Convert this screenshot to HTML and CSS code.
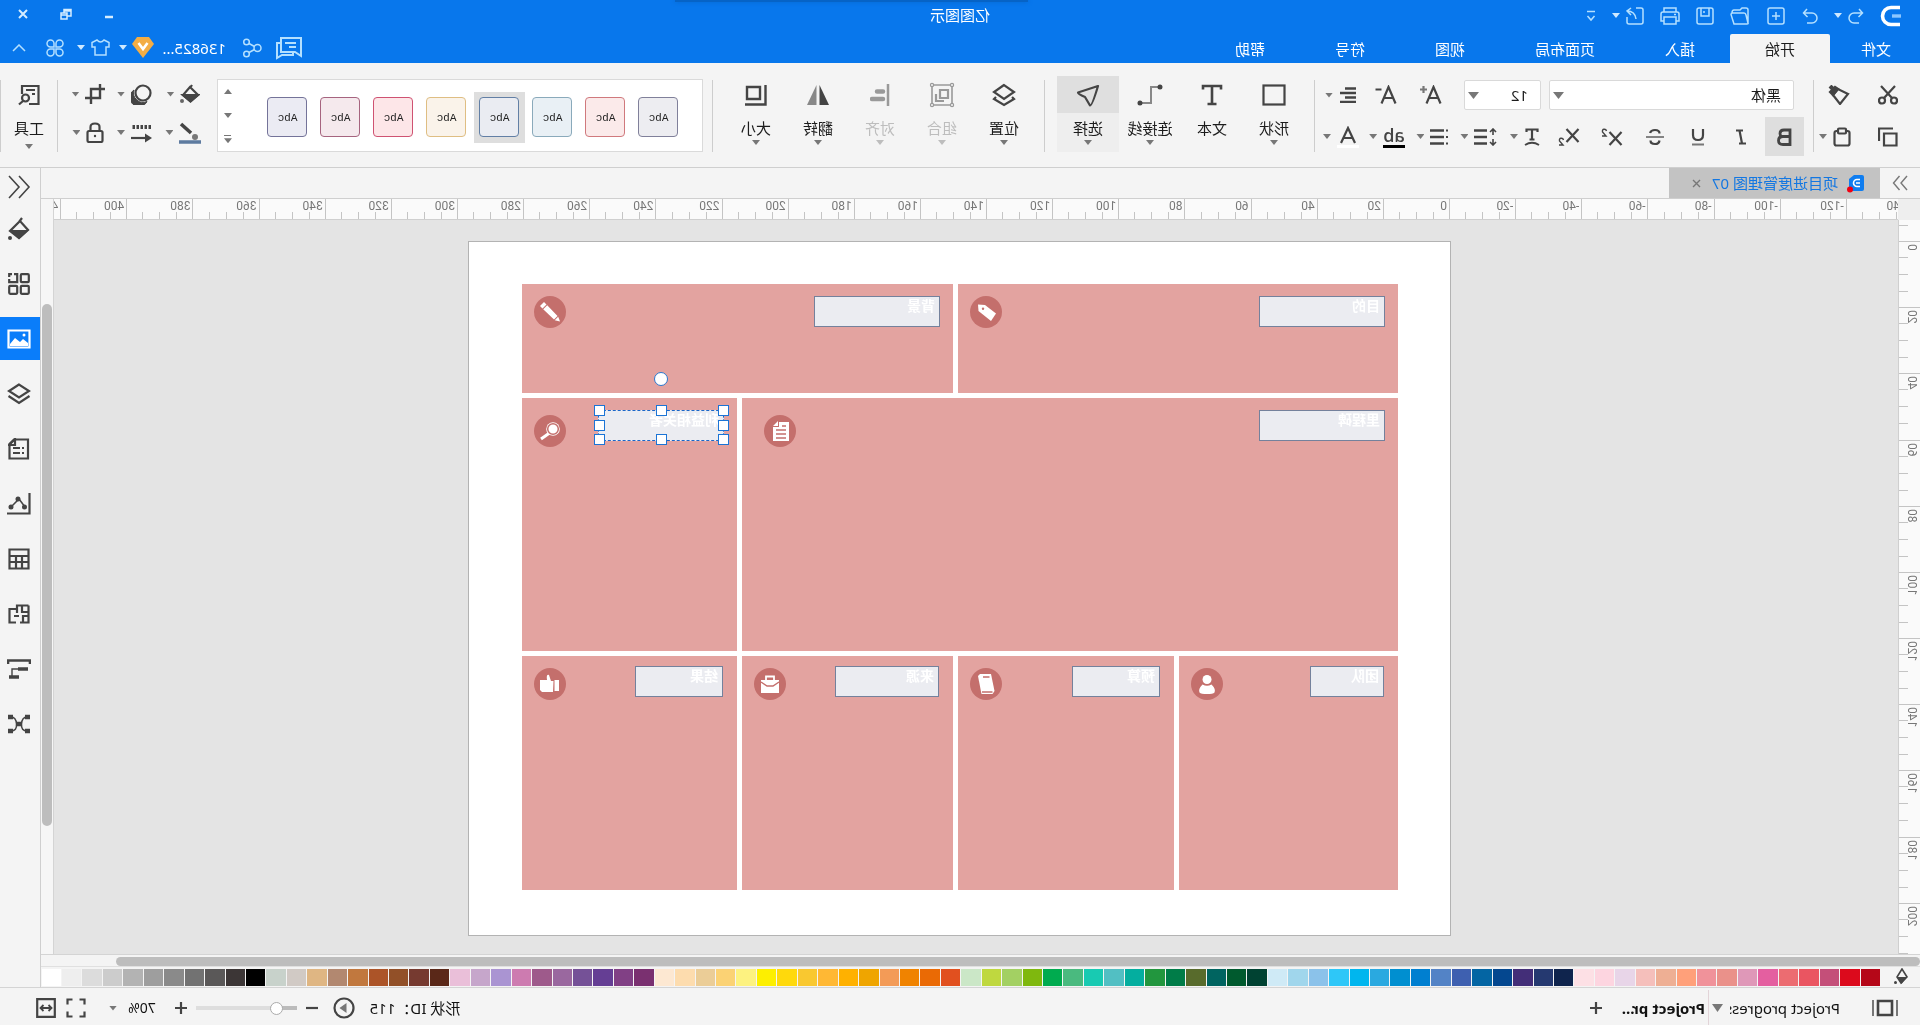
FILE: index.html
```html
<!DOCTYPE html>
<html lang="zh-CN">
<head>
<meta charset="utf-8">
<meta name="viewport" content="width=device-width, initial-scale=1">
<title>亿图图示</title>
<link rel="stylesheet" href="styles.css">
</head>
<body>
<div class="app mirrored">

<header class="header">
  <div class="title-row">
    <div class="quick">
      <svg class="logo" width="22" height="22" viewBox="0 0 22 22"><path d="M2 3H10A8 8 0 0 0 10 19H2" fill="none" stroke="none"/><path d="M20 2.500H11A8.500 8.500 0 0 0 11 19.500H20" transform="matrix(-1 0 0 1 22 0)" fill="none" stroke="#fff" stroke-width="3.600"/><path d="M1 11H10" stroke="#8cc6ff" stroke-width="3.400"/></svg>
      <button class="tb split" aria-label="撤销"><svg width="16" height="16" viewBox="0 0 16 16"><path d="M5 1 1.500 5 5.500 9M1.500 5H10a4.500 4.500 0 0 1 0 10H5"/></svg><i class="caret"></i></button>
      <button class="tb" aria-label="恢复"><svg width="16" height="16" viewBox="0 0 16 16"><path d="M11 1 14.500 5 10.500 9M14.500 5H6a4.500 4.500 0 0 0 0 10H11"/></svg></button>
      <button class="tb wide-gap" aria-label="新建"><svg width="18" height="18" viewBox="0 0 18 18"><rect x="1" y="1" width="16" height="16" rx="2"/><path d="M9 5V13M5 9H13"/></svg></button>
      <button class="tb wide-gap" aria-label="打开"><svg width="20" height="18" viewBox="0 0 20 18"><path d="M2 16V3Q2 1 4 1H8L10 3H16Q18 3 18 6M2 16Q1.500 17 3 17H16L19 7.500Q19 6 17.500 6H6Q4.500 6 4 8L2 16"/></svg></button>
      <button class="tb" aria-label="保存"><svg width="18" height="18" viewBox="0 0 18 18"><rect x="1" y="1" width="16" height="16" rx="2"/><path d="M5 1V9H13V1M10 4V6"/></svg></button>
      <button class="tb" aria-label="打印"><svg width="20" height="18" viewBox="0 0 20 18"><path d="M4 5V1H16V5M4 14H1V7Q1 5 3 5H17Q19 5 19 7V14H16M4 10H16V17H4ZM4 7.500H6"/></svg></button>
      <button class="tb split" aria-label="导出"><svg width="18" height="18" viewBox="0 0 18 18"><path d="M8 1H3Q1 1 1 3V15Q1 17 3 17H15Q17 17 17 15V10M13 1 17 4 13 8M17 4Q9 4 8 12"/></svg><i class="caret"></i></button>
      <button class="tb" aria-label="更多"><svg width="10" height="12" viewBox="0 0 10 12"><path d="M1 1.500H9M1.500 6 5 10 8.500 6"/></svg></button>
    </div>
    <h1 class="title">亿图图示</h1>
    <div class="window-buttons">
      <button aria-label="最小化"><svg width="12" height="12" viewBox="0 0 12 12"><path d="M2 9H10" stroke-width="2.500"/></svg></button>
      <button aria-label="还原"><svg width="12" height="12" viewBox="0 0 12 12"><path d="M5 5H11V11H5ZM5 8H1V1.500H8V5M1 3H8M5 7H11"/></svg></button>
      <button aria-label="关闭"><svg width="12" height="12" viewBox="0 0 12 12"><path d="M2 2 10 10M10 2 2 10" stroke-width="2"/></svg></button>
    </div>
    <div class="dock-shadow"></div>
  </div>
  <div class="tab-row">
    <nav class="tabs">
      <button class="file">文件</button><button class="active">开始</button><button>插入</button><button>页面布局</button><button>视图</button><button>符号</button><button>帮助</button>
    </nav>
    <div class="account">
      <button class="tb" aria-label="消息"><svg class="chat" width="28" height="24" viewBox="0 0 28 24"><path d="M2 2H22V16H8L2 20ZM7 7H18M7 11H14M22 7H26V22L21 19H10V16"/></svg></button>
      <button class="tb" aria-label="分享"><svg width="20" height="20" viewBox="0 0 20 20"><circle cx="4.500" cy="10" r="3.500"/><circle cx="15.500" cy="4" r="2.800"/><circle cx="15.500" cy="16" r="2.800"/><path d="M7.500 8.500 13 5.500M7.500 11.500 13 14.500"/></svg></button>
      <span class="user">136825...</span>
      <button class="tb split vip" aria-label="会员"><svg width="22" height="21" viewBox="0 0 22 21"><path d="M5 0H17L22 7 11 21 0 7Z" fill="#f3ad45" stroke="none"/><path d="M6.500 6 11 12 15.500 6" stroke="#fff" stroke-width="2.600"/></svg><i class="caret"></i></button>
      <button class="tb split" aria-label="皮肤"><svg width="19" height="17" viewBox="0 0 19 17"><path d="M6 1 1 3.500V8H4V16H15V8H18V3.500L13 1Q9.500 5 6 1Z"/></svg><i class="caret"></i></button>
      <button class="tb" aria-label="应用"><svg width="18" height="18" viewBox="0 0 18 18"><path d="M8 8H4.500A3.500 3.500 0 1 1 8 4.500ZM10 8H13.500A3.500 3.500 0 1 0 10 4.500ZM8 10H4.500A3.500 3.500 0 1 0 8 13.500ZM10 10H13.500A3.500 3.500 0 1 1 10 13.500Z"/></svg></button>
      <button class="tb" aria-label="收起"><svg width="14" height="8" viewBox="0 0 14 8"><path d="M1 7 7 1 13 7"/></svg></button>
    </div>
  </div>
</header>

<section class="ribbon">
  <div class="clipboard">
    <button aria-label="剪切"><svg width="20" height="20" viewBox="0 0 20 20"><circle cx="4" cy="15.500" r="3"/><circle cx="16" cy="15.500" r="3"/><path d="M6 13 17 1M14 13 3 1"/></svg></button>
    <button aria-label="格式刷"><svg width="22" height="20" viewBox="0 0 22 20"><path d="M2 9 12 4 17 10 10 19Z"/><path d="M12 4 15 2 20 7 17 10Z" fill="#444"/><path d="M17 4 20 1" stroke-width="4"/></svg></button>
    <button aria-label="复制"><svg width="20" height="20" viewBox="0 0 20 20"><path d="M1.500 6.500H14V18.500H1.500ZM5 1.500H19V14"/></svg></button>
    <button class="split" aria-label="粘贴"><svg width="18" height="20" viewBox="0 0 18 20"><rect x="1.500" y="4" width="15" height="14.500" rx="2"/><rect x="5" y="1.500" width="8" height="5" rx="1" fill="#f4f4f4"/></svg><i class="caret"></i></button>
  </div>
  <div class="sep"></div>
  <div class="font">
    <div class="font-row first">
      <label class="combo family"><select aria-label="字体"><option>黑体</option></select></label>
      <label class="combo size"><select aria-label="字号"><option>12</option></select></label>
      <button class="w45" aria-label="增大字号"><svg width="22" height="20" viewBox="0 0 22 20"><path d="M1.500 18.500 8.500 2 15.500 18.500M4 13H13"/><path d="M18.500 1V8M15 4.500H22" stroke="#777"/></svg></button>
      <button class="w45" aria-label="减小字号"><svg width="22" height="20" viewBox="0 0 22 20"><path d="M1.500 18.500 8.500 2 15.500 18.500M4 13H13M15.500 4.500H21.500"/></svg></button>
      <button class="w46 split" aria-label="对齐"><svg width="18" height="16" viewBox="0 0 18 16"><path d="M1 1.500H12M1 6H17M1 10.500H12M1 15H17" stroke-width="2.400"/></svg><i class="caret"></i></button>
    </div>
    <div class="font-row">
      <button class="bold on" aria-label="粗体"><svg width="15" height="18" viewBox="0 0 15 18"><path d="M2 2H8Q12 2 12 5.500T8 8.500H2H9Q13.500 8.500 13.500 12.500T9 16.500H2Z" stroke-width="2.800"/></svg></button>
      <button class="w43" aria-label="斜体"><svg width="14" height="16" viewBox="0 0 14 16"><path d="M5 1.500H12M2 14.500H9M8.500 1.500 6 14.500"/></svg></button>
      <button class="w43" aria-label="下划线"><svg width="14" height="18" viewBox="0 0 14 18"><path d="M2 1V7Q2 12 7 12T12 7V1"/><path d="M1 16.500H13" stroke="#777" stroke-width="2"/></svg></button>
      <button class="w43" aria-label="删除线"><svg width="18" height="18" viewBox="0 0 18 18"><path d="M14 5Q13 2 9 2 4.500 2 4.500 5.500M4.500 12.500Q5 16 9 16 13.500 16 13.500 12.500"/><path d="M0 9H18" stroke="#777" stroke-width="1.800"/></svg></button>
      <button class="w43" aria-label="上标"><svg width="22" height="18" viewBox="0 0 22 18"><path d="M1.500 4 13.500 17M13.500 4 1.500 17"/><path d="M16.500 3Q17 1 19 1.200T20.500 4L17 8H21" stroke-width="1.400"/></svg></button>
      <button class="w43" aria-label="下标"><svg width="22" height="18" viewBox="0 0 22 18"><path d="M1.500 1 13.500 14M13.500 1 1.500 14"/><path d="M16.500 12Q17 10 19 10.200T20.500 13L17 17H21" stroke-width="1.400"/></svg></button>
      <button class="w46 split" aria-label="文字效果"><svg width="16" height="18" viewBox="0 0 16 18"><path d="M2.500 4V1.500H13.500V4M8 1.500V11.500M5.500 11.500H10.500"/><path d="M1 17Q8 12.500 15 17" stroke-width="1.800"/></svg><i class="caret"></i></button>
      <button class="w46 split" aria-label="行距"><svg width="23" height="18" viewBox="0 0 23 18"><path d="M10 2.500H23M10 9H23M10 15.500H23" stroke-width="2.400"/><path d="M1 4 4 1 7 4M4 1V7M1 14 4 17 7 14M4 17V11" stroke-width="1.600"/></svg><i class="caret"></i></button>
      <button class="w46 split" aria-label="列表"><svg width="19" height="18" viewBox="0 0 19 18"><path d="M5 2.500H19M5 9H19M5 15.500H19" stroke-width="2.400"/><path d="M1 2.500H3M1 9H3M1 15.500H3" stroke-width="2.200"/></svg><i class="caret"></i></button>
      <button class="w46 split" aria-label="突出显示"><span class="ab">ab</span><i class="caret"></i></button>
      <button class="w46 split" aria-label="字体颜色"><svg width="22" height="22" viewBox="0 0 22 22"><path d="M4 17 11 2 18 17M6.500 12H15.500"/><path d="M0 20.500H22" stroke="#fff" stroke-width="3"/></svg><i class="caret"></i></button>
    </div>
  </div>
  <div class="sep"></div>
  <div class="bigs">
    <button><span class="ico"><svg width="24" height="22" viewBox="0 0 24 22"><rect x="1.500" y="1.500" width="21" height="19"/></svg></span><span>形状</span><i class="caret"></i></button>
    <button><span class="ico"><svg width="22" height="22" viewBox="0 0 22 22"><path d="M2 5.500V2H20V5.500M11 2V20M6.500 20H15.500" stroke-width="2.600"/></svg></span><span>文本</span></button>
    <button><span class="ico"><svg width="26" height="22" viewBox="0 0 26 22"><path d="M3 3H12V19H23" stroke="#888" stroke-width="2"/><circle cx="3" cy="3" r="2.500" fill="#444" stroke="none"/><circle cx="23" cy="19" r="2.500" fill="#444" stroke="none"/></svg></span><span>连接线</span><i class="caret"></i></button>
    <button class="on"><span class="ico"><svg width="24" height="24" viewBox="0 0 24 24"><path d="M2 3 22 9.500Q22 11 15 14L10 22.500Q8 23 2 3Z" stroke-linejoin="round"/></svg></span><span>选择</span><i class="caret"></i></button>
  </div>
  <div class="sep"></div>
  <div class="bigs">
    <button><span class="ico"><svg width="24" height="24" viewBox="0 0 24 24"><path d="M12 2 22 9 12 16 2 9ZM4 14 2 16 12 22 22 16 20 14"/></svg></span><span>位置</span><i class="caret"></i></button>
    <button disabled><span class="ico"><svg width="26" height="26" viewBox="0 0 26 26"><path d="M3 3H23V23H3Z" stroke-width="1.600"/><path d="M7 8H15V16H7Z M11 19H19V12"/><g fill="#f4f4f4" stroke-width="1.200"><circle cx="3" cy="3" r="1.600"/><circle cx="23" cy="3" r="1.600"/><circle cx="3" cy="23" r="1.600"/><circle cx="23" cy="23" r="1.600"/></g></svg></span><span>组合</span><i class="caret"></i></button>
    <button disabled><span class="ico"><svg width="20" height="22" viewBox="0 0 20 22"><path d="M2 0V22" stroke-width="2.500"/><path d="M7 7.500H13M7 15H18" stroke-width="4.500" stroke-linecap="round"/></svg></span><span>对齐</span><i class="caret"></i></button>
    <button><span class="ico"><svg width="24" height="22" viewBox="0 0 24 22"><path d="M10.500 1V21H1Z" fill="#444" stroke="none"/><path d="M13.500 1V21H23Z" fill="#888" stroke="none"/></svg></span><span>翻转</span><i class="caret"></i></button>
    <button><span class="ico"><svg width="22" height="22" viewBox="0 0 22 22"><path d="M7 3H20V15H7ZM1.500 1V20.500H22" stroke-width="2.400"/></svg></span><span>大小</span><i class="caret"></i></button>
  </div>
  <div class="sep"></div>
  <div class="gallery">
    <div class="chips">
      <button class="chip c1"><span>Abc</span></button><button class="chip c2"><span>Abc</span></button><button class="chip c3"><span>Abc</span></button><button class="chip c4 on"><span>Abc</span></button><button class="chip c5"><span>Abc</span></button><button class="chip c6"><span>Abc</span></button><button class="chip c7"><span>Abc</span></button><button class="chip c8"><span>Abc</span></button>
    </div>
    <div class="spin"><button aria-label="上"><i class="caret up"></i></button><button aria-label="下"><i class="caret"></i></button><button class="all" aria-label="全部"><i class="caret"></i></button></div>
  </div>
  <div class="style-tools">
    <button class="split" aria-label="填充"><svg width="20" height="20" viewBox="0 0 20 20"><path d="M8 1 10 4M10 3 17 11 9.500 17 2 11Z"/><path d="M2 11H17L9.500 17.500Z" fill="#444"/><circle cx="18" cy="17" r="2" fill="#666" stroke="none"/></svg><i class="caret"></i></button>
    <button class="split" aria-label="阴影"><svg width="21" height="21" viewBox="0 0 21 21"><circle cx="9" cy="9" r="7.500"/><path d="M18 6A9 9 0 1 1 5 17.500 9.500 9.500 0 0 0 18 6Z" fill="#444" stroke-width="1"/></svg><i class="caret"></i></button>
    <button class="split" aria-label="裁剪"><svg width="20" height="20" viewBox="0 0 20 20"><path d="M5 0V14H20M0 5H14V20" stroke-width="2.400"/></svg><i class="caret"></i></button>
    <button class="split" aria-label="线条"><svg width="22" height="22" viewBox="0 0 22 22"><path d="M20 2 10 11" stroke-width="3.600"/><circle cx="6" cy="15" r="3" fill="#777" stroke="none"/><path d="M0 20H22" stroke="#5d7a9f" stroke-width="3.500"/></svg><i class="caret"></i></button>
    <button class="split" aria-label="箭头"><svg width="21" height="20" viewBox="0 0 21 20"><path d="M1 4H20" stroke-width="4" stroke-dasharray="2.500 1.500"/><path d="M21 15H5"/><path d="M7 10.500 0 15 7 19.500Z" fill="#444" stroke="none"/></svg><i class="caret"></i></button>
    <button class="split" aria-label="锁定"><svg width="18" height="21" viewBox="0 0 18 21"><rect x="1.500" y="9" width="15" height="11" rx="1.500"/><path d="M4.500 9V5Q4.500 1.500 9 1.500T13.500 5V9" /><circle cx="9" cy="14" r="1.200" fill="#444" stroke="none"/></svg><i class="caret"></i></button>
  </div>
  <div class="sep"></div>
  <div class="bigs tools">
    <button><span class="ico"><svg width="22" height="22" viewBox="0 0 22 22"><path d="M11 20H1.500V2H18V10M5 6H14M5 10H8" stroke-width="2.200"/><circle cx="14.500" cy="14" r="3.500"/><path d="M17 17 21 20.500"/></svg></span><span>工具</span><i class="caret"></i></button>
  </div>
  <div class="sep"></div>
</section>

<main class="body">
  <div class="main">
    <div class="doc-tabs">
      <button class="more" aria-label="展开"><svg width="16" height="16" viewBox="0 0 16 16"><path d="M1 1 7 8 1 15M8.500 1 14.500 8 8.500 15"/></svg></button>
      <div class="doc">
        <svg width="18" height="19" viewBox="0 0 18 19"><path d="M1 3Q1 1 3 1H11L16 5V15Q16 17 14 17H3Q1 17 1 15Z" fill="#0f7df0"/><path d="M5 5.500H8A3.500 3.500 0 0 1 8 12.500H5M5 9H9" fill="none" stroke="#fff" stroke-width="1.600"/><circle cx="15" cy="15.500" r="3" fill="#f00012"/></svg>
        <a href="#page">项目进度管理图 07</a>
        <button aria-label="关闭文档"><svg width="9" height="9" viewBox="0 0 9 9"><path d="M1 1 8 8M8 1 1 8"/></svg></button>
      </div>
    </div>
    <div class="stage">
      <div class="corner"></div>
      <div class="ruler-h"><div class="scale" id="ruler-h"></div></div>
      <div class="ruler-v"><div class="scale" id="ruler-v"></div></div>
      <div class="canvas">
        <div class="page" id="page">
          <div class="cell span2"><div class="tag">目的</div><svg class="disc" viewBox="0 0 32 32"><path d="M24 8.500 23.500 15 11 25 6 17.500 17 9Z"/><circle class="hole" cx="19" cy="12.800" r="1.200"/></svg></div>
          <div class="cell span2"><div class="tag">背景</div><svg class="disc" viewBox="0 0 32 32"><path d="M22 6 26 10 23.500 12.500 19.500 8.500ZM18.800 9.200 22.800 13.200 12 23.500 8.500 20ZM7.800 20.700 11.300 24.200 6 25.500Z"/></svg></div>
          <div class="cell span3 mid wide"><div class="tag">里程碑</div><svg class="disc" viewBox="0 0 32 32"><path d="M7 7H17V12H23V26H7ZM18 6 23 11H18Z"/><path class="cut" d="M10 11H14M10 15H20M10 19H20M10 23H20"/></svg></div>
          <div class="cell mid">
            <div class="tag selected">利益相关者
              <i class="rot"></i><i class="h tl"></i><i class="h tc"></i><i class="h tr"></i><i class="h ml"></i><i class="h mr"></i><i class="h bl"></i><i class="h bc"></i><i class="h br"></i>
            </div>
            <svg class="disc" viewBox="0 0 32 32"><path d="M16.500 18 25 24" stroke="#fff" stroke-width="3"/><circle cx="13" cy="14" r="6.800"/><circle class="cut" cx="13" cy="14" r="5.300" stroke-width="1"/></svg>
          </div>
          <div class="cell low"><div class="tag s74">团队</div><svg class="disc" viewBox="0 0 32 32"><circle cx="16" cy="11.500" r="4.500"/><path d="M11.500 16.500Q16 19 20.500 16.500 25 21 23.500 24.500 22 26 16 26T8.500 24.500Q7 21 11.500 16.500Z"/></svg></div>
          <div class="cell low"><div class="tag s88">预算</div><svg class="disc" viewBox="0 0 32 32"><path d="M11 6H22L24 8 21 23.500 20.500 26H9.500L7.500 23Z"/><path class="cut" d="M12.500 9H19M9.500 24H20" stroke-width="1.500"/></svg></div>
          <div class="cell low"><div class="tag s104">来源</div><svg class="disc" viewBox="0 0 32 32"><path d="M7 12H25V25H7Z"/><path d="M12 12V8.500H20V12" fill="none" stroke="#fff" stroke-width="1.800"/><path class="cut" d="M7 14 13 18H19L25 14" stroke-width="1.600"/></svg></div>
          <div class="cell low"><div class="tag s88">结果</div><svg class="disc" viewBox="0 0 32 32"><path d="M7 12H11.500V23H7ZM12.500 13H15L17 7Q20 6 19 12H26V22L24 24H13Z"/></svg></div>
        </div>
      </div>
      <div class="scroll-v"><div class="thumb"></div></div>
    </div>
    <div class="scroll-h"><div class="thumb"></div></div>
    <div class="palette">
      <button aria-label="填充颜色"><svg width="16" height="18" viewBox="0 0 16 18"><path d="M7 1 12 9 8 15 2 9Z" stroke-width="1.600"/><path d="M2 9H12L7.500 16Z" fill="#444" stroke="none"/><circle cx="13.500" cy="14.500" r="1.500" fill="#444" stroke="none"/></svg></button>
      <div class="swatches" id="swatches"></div>
    </div>
  </div>
  <aside class="side">
    <button class="first" aria-label="收起面板"><svg width="24" height="24" viewBox="0 0 24 24"><path d="M12 1 2 12 12 23M22 1 12 12 22 23"/></svg></button>
    <button aria-label="填充"><svg width="24" height="24" viewBox="0 0 24 24"><path d="M9 1 12 5M11 4 21 14 12 21 3 13Z"/><path d="M2 13H21L12 22Z" fill="#444" stroke="none"/><circle cx="21" cy="21" r="2" fill="#444" stroke="none"/></svg></button>
    <button aria-label="主题"><svg width="22" height="22" viewBox="0 0 22 22"><rect x="1.200" y="1.200" width="8" height="8" rx="1"/><rect x="1.200" y="12.800" width="8" height="8" rx="1"/><rect x="12.800" y="12.800" width="8" height="8" rx="1"/><path d="M16 1.200H12.800V9.200H20.800V6M18 1.200H20.800V4"/></svg></button>
    <button class="on" aria-label="图片"><svg width="24" height="20" viewBox="0 0 24 20"><path d="M1.500 1.500H22.500V18.500H1.500Z"/><path d="M3 17V14L8 10 11 13 16 9 21 15V17Z" fill="#fff" stroke="none"/><circle cx="7" cy="6" r="1.500" fill="#fff" stroke="none"/></svg></button>
    <button aria-label="图层"><svg width="24" height="22" viewBox="0 0 24 22"><path d="M12 1.500 22 8 12 14.500 2 8ZM1.500 13 12 20 22.500 13"/></svg></button>
    <button aria-label="页面"><svg width="22" height="22" viewBox="0 0 22 22"><path d="M2 1.500H16L20.500 6V20.500H2Z"/><path d="M15 1 21 7H15ZM6 10H8M10 10H17M6 15H8M10 15H17"/></svg></button>
    <button aria-label="图表"><svg width="24" height="22" viewBox="0 0 24 22"><path d="M1.500 0V20.500H24"/><path d="M6 14 12 6 20 14" stroke-width="1.500"/><g fill="#444" stroke="none"><circle cx="6.500" cy="14" r="2.500"/><circle cx="13" cy="6" r="2.500"/><circle cx="20" cy="14" r="2.500"/></g></svg></button>
    <button aria-label="表格"><svg width="22" height="22" viewBox="0 0 22 22"><path d="M1.500 1.500H20.500V20.500H1.500ZM1.500 8H20.500M1.500 14H20.500M8 8V20M14 8V20"/></svg></button>
    <button aria-label="平面图"><svg width="22" height="20" viewBox="0 0 22 20"><path d="M1.500 1.500H13V5H20.500V18.500H14M10 18.500H1.500V1.500M8 1.500V8H1.500M1.500 12H7V18M13 5V9M11 12H16"/></svg></button>
    <button aria-label="甘特图"><svg width="24" height="20" viewBox="0 0 24 20"><path d="M1 5V1.500H23V5" stroke-width="2.600"/><path d="M3 10H13M12 18H22" stroke-width="3.500"/><path d="M13 10H19V17" stroke-width="1.400"/></svg></button>
    <button aria-label="思维导图"><svg width="24" height="20" viewBox="0 0 24 20"><path d="M4 3Q9 3 9.500 10T4 17M20 3Q15 3 14.500 10T20 17M9 10H15" stroke-width="1.500"/><path d="M1 3H6M1 17H6M18 3H23M18 17H23M9 10H15" stroke-width="4.500"/></svg></button>
  </aside>
</main>

<footer class="status">
  <button class="view" aria-label="页面视图"><svg width="28" height="18" viewBox="0 0 28 18"><path d="M7 2H21V16H7Z" stroke-width="2.600"/><path d="M2 1V17M26 1V17" stroke="#777" stroke-width="2"/></svg></button>
  <label class="pages"><select aria-label="页面"><option>Project progress</option></select></label>
  <button class="current">Project pr...</button>
  <button class="add" aria-label="新建页面"><svg width="12" height="12" viewBox="0 0 12 12"><path d="M6 0V12M0 6H12"/></svg></button>
  <span class="shape-id">形状 ID：115</span>
  <button aria-label="播放"><svg width="22" height="22" viewBox="0 0 22 22"><circle cx="11" cy="11" r="9.500"/><path d="M8.500 6 15.500 11 8.500 16Z" fill="#777" stroke="none"/></svg></button>
  <button aria-label="缩小"><svg width="12" height="12" viewBox="0 0 12 12"><path d="M0 6H12"/></svg></button>
  <input class="zoom" type="range" min="0" max="100" value="16" aria-label="缩放">
  <button aria-label="放大"><svg width="12" height="12" viewBox="0 0 12 12"><path d="M6 0V12M0 6H12"/></svg></button>
  <button class="percent">70%<i class="caret"></i></button>
  <button aria-label="全屏"><svg width="20" height="20" viewBox="0 0 20 20"><path d="M1.500 6.500V1.500H6.500M13.500 1.500H18.500V6.500M18.500 13.500V18.500H13.500M6.500 18.500H1.500V13.500"/></svg></button>
  <button class="fit" aria-label="适合宽度"><svg width="20" height="20" viewBox="0 0 20 20"><path d="M1.200 1.200H18.800V18.800H1.200Z"/><path d="M7.500 7 4.500 10 7.500 13M12.500 7 15.500 10 12.500 13M5 10H15" stroke-width="1.800"/></svg></button>
</footer>
</div>
<script src="script.js"></script>
</body>
</html>
```
FILE: styles.css
```css
* { box-sizing: border-box; }
body { margin: 0; background: #f4f4f4; color: #1c1c1c; font: 15px/20px "Noto Sans CJK SC", "Noto Sans", sans-serif; }
button { margin: 0; padding: 0; border: 0; background: none; color: inherit; font: inherit; display: flex; align-items: center; justify-content: center; }
svg { display: block; flex: none; fill: none; stroke: #444; stroke-width: 2.2; }
select { appearance: none; width: 100%; border: 0; background: none; font: inherit; color: inherit; outline: 0; }

.app { min-height: 100vh; display: flex; flex-direction: column; overflow: hidden; }
/* The whole workspace is displayed as a mirror image. */
.mirrored { transform: scaleX(-1); }

.caret { flex: none; width: 8px; height: 5px; background: #777; clip-path: polygon(0 0, 100% 0, 50% 100%); }
.caret.up { transform: rotate(180deg); }
.split { gap: 6px; }

/* header */
.header { background: #0877ec; color: #fff; }
.header svg { stroke: #b4e0ff; stroke-width: 1.5; }
.header .chat { stroke-width: 2; }
.header .caret { background: #cfe9ff; }
.title-row { position: relative; display: grid; grid-template-columns: 1fr auto 1fr; align-items: center; height: 32px; }
.quick { display: flex; align-items: center; gap: 16px; padding: 0 0 1px 18px; }
.quick .wide-gap { margin-left: 1px; }
.title { margin: 0; padding-bottom: 2px; font-size: 15px; font-weight: 400; line-height: 30px; }
.window-buttons { display: flex; justify-content: flex-end; gap: 31px; padding: 0 17px 5px 0; }
.window-buttons svg { stroke: #d5edff; }
.dock-shadow { position: absolute; top: 0; left: 892px; width: 353px; height: 2px; background: #0663c6; box-shadow: 0 0 4px #0663c6; }
.tab-row { display: flex; justify-content: space-between; height: 31px; }
.tabs { display: flex; padding-top: 2px; }
.tabs button { padding: 0 35px; }
.tabs .file { padding: 0 31px 0 29px; }
.tabs .active { background: #f4f4f4; color: #1c1c1c; border-radius: 2px 2px 0 0; }
.account { display: flex; align-items: center; gap: 13px; padding-right: 12px; }
.account .user { margin: 0 -9px 0 3px; font-family: "Noto Sans", sans-serif; width: 68px; }
.account .vip { gap: 5px; margin-right: -4px; }
.account .tb:last-child { margin-left: 7px; }

/* ribbon */
.ribbon { display: flex; align-items: flex-start; height: 105px; border-bottom: 1px solid #cfcfcf; }
.sep { flex: none; width: 1px; height: 72px; margin-top: 17px; background: #cdcdcd; }
.clipboard { display: grid; grid-template-columns: 48px 50px; grid-template-rows: 30px 39px; gap: 7px 0; padding: 17px 0 0 8px; }
.clipboard .split { padding-left: 8px; }
.font { width: 498px; padding: 17px 0 0 9px; }
.font-row { display: flex; height: 39px; }
.font-row.first { height: 30px; margin-bottom: 7px; padding-left: 10px; }
.combo { position: relative; display: flex; height: 30px; background: #fff; border: 1px solid #d9d9d9; border-radius: 2px; }
.combo::after { content: ""; position: absolute; right: 3px; top: 11px; width: 11px; height: 7px; background: #777; clip-path: polygon(0 0, 100% 0, 50% 100%); }
.combo select { padding: 0 12px; font-family: "Noto Sans", "Noto Sans CJK SC", sans-serif; }
.family { width: 245px; margin-right: 8px; }
.size { width: 77px; margin-right: 10px; }
.w43 { width: 43px; } .w45 { width: 45px; } .w46 { width: 46px; }
.bold { width: 39px; margin-right: 2px; }
.bold.on { background: #dedede; }
.ab { font: 600 18px/18px "Open Sans", sans-serif; color: #444; border-bottom: 3px solid #000; height: 22px; }

.bigs { display: flex; padding: 13px 12px 0 9px; }
.bigs button { flex-direction: column; justify-content: flex-start; width: 62px; height: 76px; }
.bigs .ico { display: flex; align-items: center; justify-content: center; width: 62px; height: 37px; margin-bottom: 5px; }
.bigs .caret { margin-top: 2px; }
.bigs .on { background: #eeeeee; }
.bigs .on .ico { background: #dfdfdf; }
.bigs button:disabled { color: #bdbdbd; }
.bigs button:disabled svg { stroke: #999; }
.bigs button:disabled .caret { background: #bdbdbd; }
.tools { padding: 13px 0 0; }
.tools button { width: 56px; }
.tools .caret { margin-top: 6px; }

.gallery { flex: 1; display: flex; justify-content: space-between; align-items: center; height: 73px; margin: 16px 9px 0; background: #fff; border: 1px solid #dadada; }
.chips { display: flex; gap: 2px; padding: 3px 0 0 18px; }
.chip { width: 51px; height: 51px; }
.chip.on { background: #dedede; }
.chip span { width: 40px; height: 40px; border: 1px solid; border-radius: 4px; color: #222; font: 11px/40px "Liberation Mono", monospace; }
.c1 span { background: #ededf1; border-color: #80809a; } .c2 span { background: #fbeaea; border-color: #d0797d; }
.c3 span { background: #e9f0f5; border-color: #8aaabb; } .c4 span { background: #eaecf2; border-color: #627fa5; }
.c5 span { background: #faf3ea; border-color: #dfbe83; } .c6 span { background: #fde6e8; border-color: #cf5272; }
.c7 span { background: #f5e9ed; border-color: #a6647f; } .c8 span { background: #ebebf3; border-color: #747399; }
.spin { display: flex; flex-direction: column; width: 20px; height: 71px; }
.spin button { flex: 1; }
.spin .all { flex-direction: column; gap: 2px; }
.spin .all::before { content: ""; width: 7px; height: 1px; background: #777; }
.style-tools { display: grid; grid-template-columns: 49px 49px 43px; grid-template-rows: 30px 37px; gap: 5px 0; padding: 16px 9px 0 0; }

/* document area */
.body { flex: 1; display: grid; grid-template-columns: 1fr 41px; }
.main { display: flex; flex-direction: column; min-width: 0; overflow: hidden; }
.doc-tabs { display: flex; height: 31px; border-bottom: 1px solid #cfcfcf; }
.doc-tabs svg { stroke-width: 1.4; stroke: #777; }
.more { width: 40px; }
.doc { display: flex; align-items: center; gap: 9px; width: 211px; padding-left: 15px; background: #c3c3c3; }
.doc a { color: #1377e2; text-decoration: none; font-family: "Noto Sans", "Noto Sans CJK SC", sans-serif; white-space: nowrap; }
.doc > svg { stroke: none; }
.doc button { margin-left: 2px; }
.stage { flex: 1; display: grid; grid-template-columns: 22px 1fr 13px; grid-template-rows: 21px 1fr; }
.corner { background: #eeeeee; }
.ruler-h { grid-column: 2; overflow: hidden; background: #fafafa; border-bottom: 1px solid #cfcfcf; }
.ruler-v { grid-row: 2; position: relative; overflow: hidden; background: #fafafa; border-right: 1px solid #cfcfcf; }
.scale { display: grid; color: #777; font: 12px/15px Roboto, sans-serif; }
.ruler-h .scale { grid-template-columns: repeat(29, 1fr); width: 1918px; margin-left: -15px; height: 20px; }
.ruler-v .scale { grid-template-rows: repeat(12, 1fr); position: absolute; top: -45px; left: 0; width: 22px; height: 794px; }
.ruler-h .unit { padding-left: 2px; border-left: 1px solid #c4c4c4; background: repeating-linear-gradient(90deg, transparent 0 15px, #c4c4c4 15px 16px, transparent 16px 17px) 0 13px / 50px 7px no-repeat; white-space: nowrap; }
.ruler-h .unit span { display: block; }
.ruler-v .unit { padding: 2px 0 0 1px; border-top: 1px solid #c4c4c4; background: repeating-linear-gradient(180deg, transparent 0 15px, #c4c4c4 15px 16px, transparent 16px 17px) 12px 0 / 10px 50px no-repeat; }
.ruler-v .unit span { display: block; width: 15px; writing-mode: vertical-rl; transform: rotate(180deg); }
.canvas { grid-row: 2; grid-column: 2; background: #e4e4e4; padding: 21px 0 18px 447px; overflow: hidden; }
.scroll-v { grid-row: 1 / 3; grid-column: 3; border-left: 1px solid #d4d4d4; padding: 105px 1px 0; background: #f6f6f6; }
.scroll-v .thumb { height: 522px; border-radius: 5px; background: #bdbdbd; }
.scroll-h { height: 13px; padding: 2px 0 0; border-top: 1px solid #d4d4d4; border-bottom: 1px solid #e0e0e0; }
.scroll-h .thumb { height: 9px; margin-right: 75px; border-radius: 5px; background: #bdbdbd; }

.page { display: grid; grid-template-columns: 219px 216px 211px 215px; grid-template-rows: 109px 253px 234px; gap: 5px; width: 983px; height: 695px; padding: 42px 52px; background: #fff; border: 1px solid #b3b3b3; }
.cell { display: flex; justify-content: space-between; align-items: flex-start; padding: 12px 12px 12px 13px; background: #e3a3a0; }
.span2 { grid-column: span 2; } .span3 { grid-column: span 3; }
.wide { padding-right: 22px; }
.mid .disc { margin-top: 5px; }
.low { padding: 10px 12px 10px 14px; }
.low .disc { margin-top: 2px; }
.tag { position: relative; width: 126px; height: 31px; padding-left: 4px; border: 1px solid #74819c; background: #ebecf1; color: #fff; font: 700 14px/16px "Noto Sans CJK SC", sans-serif; white-space: nowrap; }
.s74 { width: 74px; } .s88 { width: 88px; } .s104 { width: 104px; }
.disc { width: 32px; height: 32px; border-radius: 50%; background: #c46f6c; fill: #fff; stroke: none; }
.disc .hole { fill: #c46f6c; }
.disc .cut { fill: none; stroke: #c46f6c; stroke-width: 1.5; }
.selected { border: 1px dashed #1b66c8; }
.h { position: absolute; width: 11px; height: 11px; margin: -6px; background: #fff; border: 1px solid #1b74d6; }
.tl, .tc, .tr { top: 0; } .ml, .mr { top: 50%; } .bl, .bc, .br { top: 100%; }
.tl, .ml, .bl { left: 0; } .tc, .bc { left: 50%; } .tr, .mr, .br { left: 100%; }
.rot { position: absolute; left: 50%; top: -39px; width: 14px; height: 14px; margin-left: -7px; border: 1px solid #2a78d0; border-radius: 50%; background: #fff; }

.palette { display: flex; align-items: center; height: 21px; border-bottom: 1px solid #d4d4d4; }
.palette button { width: 38px; margin-right: 2px; }
.swatches { flex: 1; display: flex; gap: 1px; height: 17px; padding-right: 1px; }
.swatches i { flex: 1; }

.side { border-left: 1px solid #cfcfcf; border-bottom: 1px solid #d4d4d4; display: flex; flex-direction: column; gap: 12px; }
.side button { height: 43px; padding-left: 2px; }
.side .first { height: 37px; margin-bottom: -10px; }
.side .first svg { stroke-width: 1.6; }
.side .on { background: #0a7dfa; }
.side .on svg { stroke: #fff; }

/* status bar */
.status { display: flex; align-items: center; height: 38px; padding: 2px 36px 0 21px; gap: 15px; font-family: "Noto Sans", "Noto Sans CJK SC", sans-serif; color: #111; }
.view { margin-right: 12px; }
.pages { position: relative; width: 136px; height: 36px; display: flex; border-right: 1px solid #e2d4d8; margin-right: -12px; padding-right: 21px; }
.pages select { padding: 0 0 0 4px; text-overflow: clip; }
.pages::after { content: ""; position: absolute; right: 3px; top: 14px; width: 11px; height: 8px; background: #777; clip-path: polygon(0 0, 100% 0, 50% 100%); }
.current { justify-content: flex-start; width: 88px; font-weight: 700; white-space: nowrap; }
.shape-id { margin-left: auto; }
.zoom { appearance: none; width: 101px; height: 14px; margin: 0 -6px; background: linear-gradient(90deg, #bbb 22px, #dedede 22px) center / 100% 4px no-repeat; }
.zoom::-webkit-slider-thumb { appearance: none; width: 13px; height: 13px; border: 1px solid #aaa; border-radius: 50%; background: #fff; }
.percent { gap: 11px; margin: 0 8px 0 4px; font-size: 14px; }
.fit { margin-left: -5px; }
```
FILE: script.js
```js
const colors = `b50718 dc0a1c c44f79 ea5561 ec6c71 e45fa0 df98b8 ea918a f0929a ffa07a eeaf94 f5bfbb e8d5e8 fdd5e0 fde0e5
0f244d 253970 432e78 04478f 0465a3 3e60b0 5383c6 007fd0 008fd0 2aa9e0 00b6ee 2ec7f8 8bc2ea a0d6ec cfeaf6
004232 005a2e 006460 586b2c 007c48 22963e 04ae9f 52bfc3 18cab2 4aba7f 00ab4f 7fb80e a3d063 bfd83f cbe7c7
e1501f ea6a05 f08300 f39b57 efa500 ffb100 ffb834 f9c830 ffd90c fdef00 fdf280 fbd274 ebcd97 fddcae fde8d2
7a3070 814085 653e94 755197 9a689f 9e5a8b cd7bb0 aa94d2 c6a6cb eabfd9
5a2818 763a30 925028 ac5428 c1783e b28870 dfb683 d1cac5 c8d2cb
000000 3c3636 5a5858 727272 8a8a8a 9e9e9e b3b3b3 cccccc dcdcdc eeeeee ffffff`.split(/\s+/);

const swatches = document.getElementById("swatches");
for (const color of colors) {
  const swatch = document.createElement("i");
  swatch.style.background = "#" + color;
  swatches.append(swatch);
}

function buildRuler(id, from, to) {
  const scale = document.getElementById(id);
  for (let value = from; value <= to; value += 20) {
    const unit = document.createElement("div");
    const label = document.createElement("span");
    unit.className = "unit";
    label.textContent = value;
    unit.append(label);
    scale.append(unit);
  }
}
buildRuler("ruler-h", -140, 420);
buildRuler("ruler-v", -20, 200);
```
